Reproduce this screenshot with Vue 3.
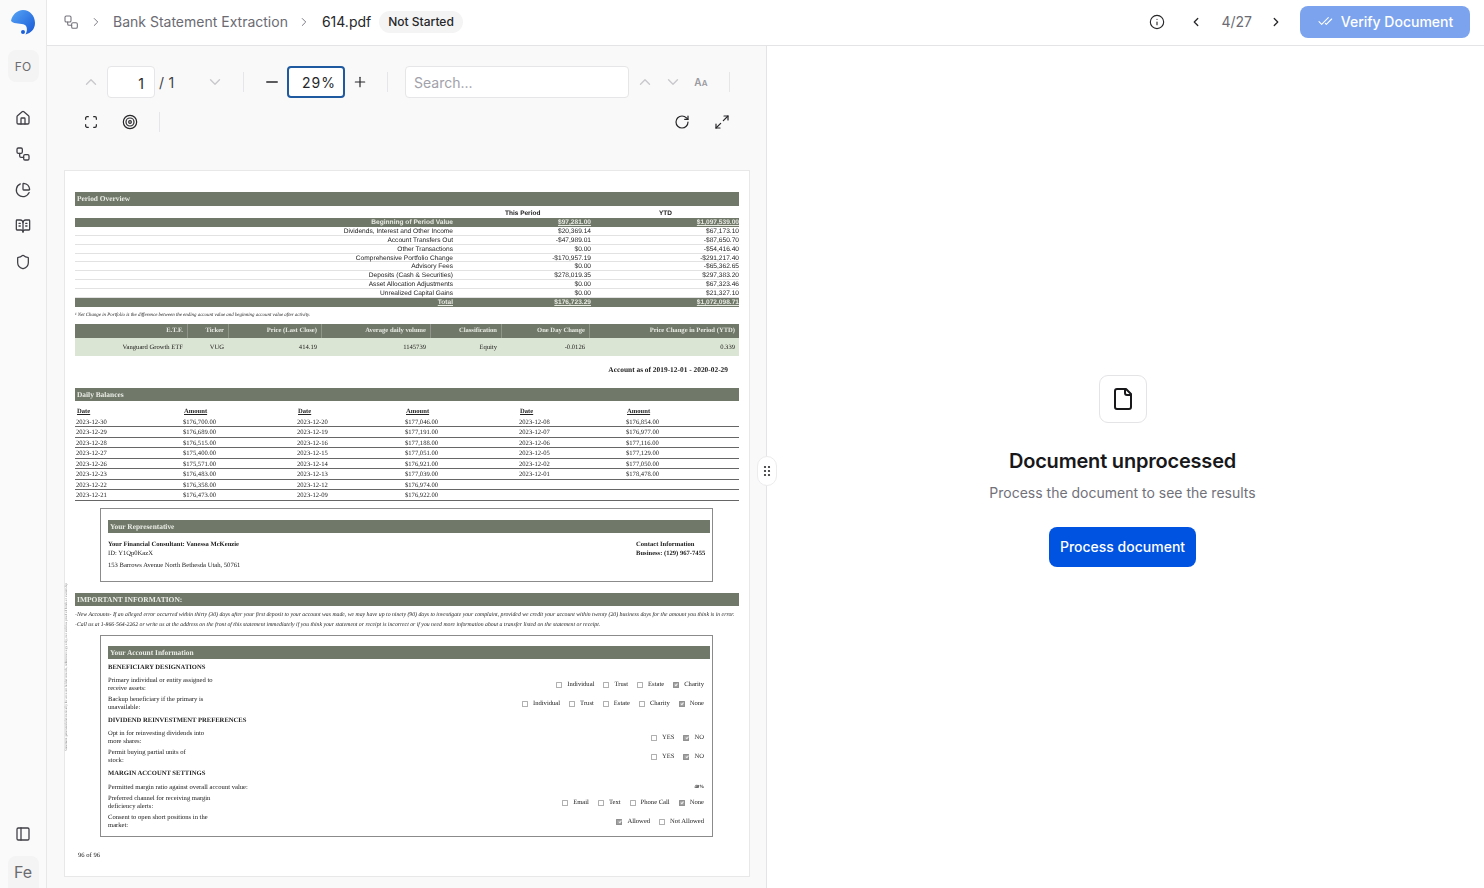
<template>
  <div class="app">
    <aside class="sidebar">
      <div class="logo_wrap">
        <svg class="logo" viewBox="0 0 26 28" aria-hidden="true">
          <defs>
            <linearGradient id="logo_grad" x1="0" y1="0" x2="1" y2="1">
              <stop offset="0" stop-color="#58a6f6" />
              <stop offset="1" stop-color="#1657d6" />
            </linearGradient>
          </defs>
          <path fill="url(#logo_grad)" d="M1 13C2 7 7 2 13 2c7 0 12 6 12 13 0 6-4 10-9.500 11.500 2-3.500 2-7.500-.5-9.500C11 14.500 5 17 1 13z" />
          <circle cx="13" cy="24" r="2" fill="#1a5fdc" />
        </svg>
      </div>
      <div class="avatar">FO</div>
      <nav class="side_nav">
        <svg v-for="item in side_icons" :key="item.name" class="icon side_icon" viewBox="0 0 24 24">
          <path v-for="d in item.paths" :key="d" :d="d" />
        </svg>
      </nav>
      <svg class="icon side_icon panel_icon" viewBox="0 0 24 24">
        <rect x="3" y="3" width="18" height="18" rx="2" />
        <path d="M9 3v18" />
      </svg>
      <div class="avatar avatar_fe">Fe</div>
    </aside>

    <div class="main">
      <header class="topbar">
        <svg class="icon crumb_icon" viewBox="0 0 24 24">
          <rect x="3" y="3" width="9" height="9" rx="2" />
          <rect x="13" y="13" width="8.500" height="8.500" rx="2" />
          <path d="M7 12v3a2 2 0 0 0 2 2h4" />
        </svg>
        <svg class="icon chev crumb_chev" viewBox="0 0 24 24"><path d="m9 18 6-6-6-6" /></svg>
        <span class="crumb">Bank Statement Extraction</span>
        <svg class="icon chev crumb_chev_2" viewBox="0 0 24 24"><path d="m9 18 6-6-6-6" /></svg>
        <span class="file_name">614.pdf</span>
        <span class="status">Not Started</span>

        <div class="top_right">
          <svg class="icon info_icon" viewBox="0 0 24 24">
            <circle cx="12" cy="12" r="10" />
            <path d="M12 16v-4" />
            <path d="M12 8h.01" />
          </svg>
          <svg class="icon chev nav_prev" viewBox="0 0 24 24"><path d="m15 18-6-6 6-6" /></svg>
          <span class="pager">4/27</span>
          <svg class="icon chev nav_next" viewBox="0 0 24 24"><path d="m9 18 6-6-6-6" /></svg>
          <button class="verify_btn">
            <svg class="icon verify_icon" viewBox="0 0 24 24">
              <path d="M17 7 7 17l-4-4" />
              <path d="m22 9-8 8-1.500-1.500" />
            </svg>
            Verify Document
          </button>
        </div>
      </header>

      <div class="content">
        <section class="viewer">
          <div class="toolbar">
            <div class="tool_row">
              <svg class="icon tool faded" viewBox="0 0 24 24"><path d="m18 15-6-6-6 6" /></svg>
              <div class="page_input">1</div>
              <span class="page_total">/ 1</span>
              <svg class="icon tool faded page_down" viewBox="0 0 24 24"><path d="m6 9 6 6 6-6" /></svg>
              <span class="tool_sep sep_a"></span>
              <svg class="icon tool zoom_minus" viewBox="0 0 24 24"><path d="M5 12h14" /></svg>
              <div class="zoom_box">29%</div>
              <svg class="icon tool zoom_plus" viewBox="0 0 24 24"><path d="M5 12h14" /><path d="M12 5v14" /></svg>
              <span class="tool_sep sep_b"></span>
              <div class="search_box">Search...</div>
              <svg class="icon tool faded search_up" viewBox="0 0 24 24"><path d="m18 15-6-6-6 6" /></svg>
              <svg class="icon tool faded" viewBox="0 0 24 24"><path d="m6 9 6 6 6-6" /></svg>
              <span class="aa"><span>A</span><span class="aa_small">A</span></span>
              <span class="tool_sep sep_c"></span>
            </div>
            <div class="tool_row tool_row_2">
              <svg class="icon tool" viewBox="0 0 24 24">
                <path d="M4 8V6a2 2 0 0 1 2-2h2" /><path d="M16 4h2a2 2 0 0 1 2 2v2" />
                <path d="M20 16v2a2 2 0 0 1-2 2h-2" /><path d="M8 20H6a2 2 0 0 1-2-2v-2" />
              </svg>
              <svg class="icon tool target" viewBox="0 0 24 24">
                <circle cx="12" cy="12" r="10" /><circle cx="12" cy="12" r="6" /><circle cx="12" cy="12" r="2" />
              </svg>
              <span class="tool_sep sep_d"></span>
              <svg class="icon tool reload" viewBox="0 0 24 24">
                <path d="M21 12a9 9 0 1 1-9-9c2.520 0 4.930 1 6.740 2.740L21 8" /><path d="M21 3v5h-5" />
              </svg>
              <svg class="icon tool expand" viewBox="0 0 24 24">
                <path d="M15 3h6v6" /><path d="m21 3-7 7" /><path d="m3 21 7-7" /><path d="M9 21H3v-6" />
              </svg>
            </div>
          </div>

          <div class="paper">
            <div class="edge_text">Statement generated electronically for account holder records, reference copy only, not valid as proof of funds or ownership</div>
            <div class="band band_lg">Period Overview</div>
            <div class="period_head">
              <span></span><span class="ph_a">This Period</span><span class="ph_b">YTD</span>
            </div>
            <div class="period_row period_band">
              <span>Beginning of Period Value</span><u>$97,281.00</u><u>$1,097,539.00</u>
            </div>
            <div v-for="row in period_rows" :key="row[0]" class="period_row">
              <span>{{ row[0] }}</span><span>{{ row[1] }}</span><span>{{ row[2] }}</span>
            </div>
            <div class="period_row period_band">
              <u>Total</u><u>$176,723.29</u><u>$1,072,098.71</u>
            </div>
            <div class="note">¹ Net Change in Portfolio is the difference between the ending account value and beginning account value after activity.</div>

            <div class="etf_grid etf_head">
              <span v-for="h in etf_head" :key="h">{{ h }}</span>
            </div>
            <div class="etf_grid etf_row">
              <span v-for="c in etf_row" :key="c">{{ c }}</span>
            </div>
            <div class="as_of">Account as of 2019-12-01 - 2020-02-29</div>

            <div class="band">Daily Balances</div>
            <div class="daily_grid daily_head">
              <span v-for="(h, i) in daily_head" :key="i">{{ h }}</span>
            </div>
            <div v-for="row in daily_rows" :key="row[0]" class="daily_grid daily_row">
              <span v-for="(c, i) in row" :key="i">{{ c }}</span>
            </div>

            <div class="box rep_box">
              <div class="band box_band">Your Representative</div>
              <div class="rep_body">
                <div>
                  <div class="rep_line"><b>Your Financial Consultant: Vanessa McKenzie</b></div>
                  <div class="rep_line">ID: Y1Qp0KazX</div>
                  <div class="rep_line rep_addr">153 Barrows Avenue North Bethesda Utah, 50761</div>
                </div>
                <div class="rep_contact">
                  <div class="rep_line"><b>Contact Information</b></div>
                  <div class="rep_line"><b>Business: (129) 967-7455</b></div>
                </div>
              </div>
            </div>

            <div class="band important">IMPORTANT INFORMATION:</div>
            <div class="fine">-New Accounts- If an alleged error occurred within thirty (30) days after your first deposit to your account was made, we may have up to ninety (90) days to investigate your complaint, provided we credit your account within twenty (20) business days for the amount you think is in error.</div>
            <div class="fine">-Call us at 1-866-564-2262 or write us at the address on the front of this statement immediately if you think your statement or receipt is incorrect or if you need more information about a transfer listed on the statement or receipt.</div>

            <div class="box acct_box">
              <div class="band box_band">Your Account Information</div>
              <template v-for="row in acct_rows" :key="row.lines[0]">
                <div v-if="row.head" class="acct_head">{{ row.lines[0] }}</div>
                <div v-else class="acct_row" :class="{ single: row.single }">
                  <div class="acct_label">
                    <div v-for="line in row.lines" :key="line">{{ line }}</div>
                  </div>
                  <b v-if="row.value" class="acct_value">{{ row.value }}</b>
                  <div v-else class="acct_opts">
                    <span v-for="o in row.opts" :key="o.t" class="opt">
                      <i class="check" :class="{ on: o.on }"></i>{{ o.t }}
                    </span>
                  </div>
                </div>
              </template>
            </div>
            <div class="page_no">96 of 96</div>
          </div>
        </section>

        <div class="splitter">
          <svg class="grip" viewBox="0 0 8 12">
            <circle v-for="p in grip" :key="p[0] + '_' + p[1]" :cx="p[0]" :cy="p[1]" r="1.100" />
          </svg>
        </div>

        <section class="results">
          <div class="file_box">
            <svg class="icon file_icon" viewBox="0 0 24 24">
              <path d="M15 2H6a2 2 0 0 0-2 2v16a2 2 0 0 0 2 2h12a2 2 0 0 0 2-2V7Z" />
              <path d="M14 2v4a2 2 0 0 0 2 2h4" />
            </svg>
          </div>
          <h2 class="empty_title">Document unprocessed</h2>
          <p class="empty_sub">Process the document to see the results</p>
          <button class="process_btn">Process document</button>
        </section>
      </div>
    </div>
  </div>
</template>

<script setup>
const side_icons = [
  {
    name: "home",
    paths: [
      "M15 21v-8a1 1 0 0 0-1-1h-4a1 1 0 0 0-1 1v8",
      "M3 10a2 2 0 0 1 .709-1.528l7-5.999a2 2 0 0 1 2.582 0l7 5.999A2 2 0 0 1 21 10v9a2 2 0 0 1-2 2H5a2 2 0 0 1-2-2z",
    ],
  },
  {
    name: "flows",
    paths: [
      "M5 3h4a2 2 0 0 1 2 2v4a2 2 0 0 1-2 2H5a2 2 0 0 1-2-2V5a2 2 0 0 1 2-2z",
      "M15 13h4a2 2 0 0 1 2 2v4a2 2 0 0 1-2 2h-4a2 2 0 0 1-2-2v-4a2 2 0 0 1 2-2z",
      "M7 11v4a2 2 0 0 0 2 2h4",
    ],
  },
  {
    name: "chart",
    paths: [
      "M21 12c.552 0 1.005-.449.95-.998a10 10 0 0 0-8.953-8.951c-.55-.055-.998.398-.998.95v8a1 1 0 0 0 1 1z",
      "M21.21 15.89A10 10 0 1 1 8 2.83",
    ],
  },
  {
    name: "book",
    paths: [
      "M12 7v14",
      "M3 18a1 1 0 0 1-1-1V4a1 1 0 0 1 1-1h5a4 4 0 0 1 4 4 4 4 0 0 1 4-4h5a1 1 0 0 1 1 1v13a1 1 0 0 1-1 1h-6a3 3 0 0 0-3 3 3 3 0 0 0-3-3z",
      "M16 12h2",
      "M16 8h2",
      "M6 12h2",
      "M6 8h2",
    ],
  },
  {
    name: "shield",
    paths: [
      "M20 13c0 5-3.5 7.5-7.66 8.95a1 1 0 0 1-.67-.01C7.5 20.5 4 18 4 13V6a1 1 0 0 1 1-1c2 0 4.5-1.2 6.24-2.72a1.17 1.17 0 0 1 1.52 0C14.51 3.81 17 5 19 5a1 1 0 0 1 1 1z",
    ],
  },
];

const grip = [[2, 2], [6, 2], [2, 6], [6, 6], [2, 10], [6, 10]];

const period_rows = [
  ["Dividends, Interest and Other Income", "$20,369.14", "$67,173.10"],
  ["Account Transfers Out", "-$47,989.01", "-$87,650.70"],
  ["Other Transactions", "$0.00", "-$54,416.40"],
  ["Comprehensive Portfolio Change", "-$170,957.19", "-$291,217.40"],
  ["Advisory Fees", "$0.00", "-$65,362.65"],
  ["Deposits (Cash & Securities)", "$278,019.35", "$297,383.20"],
  ["Asset Allocation Adjustments", "$0.00", "$67,323.46"],
  ["Unrealized Capital Gains", "$0.00", "$21,327.10"],
];

const etf_head = ["E.T.F.", "Ticker", "Price (Last Close)", "Average daily volume", "Classification", "One Day Change", "Price Change in Period (YTD)"];
const etf_row = ["Vanguard Growth ETF", "VUG", "414.19", "1145739", "Equity", "-0.0126", "0.339"];

const daily_head = ["Date", "Amount", "Date", "Amount", "Date", "Amount"];
const daily_rows = [
  ["2023-12-30", "$176,700.00", "2023-12-20", "$177,046.00", "2023-12-08", "$176,854.00"],
  ["2023-12-29", "$176,689.00", "2023-12-19", "$177,191.00", "2023-12-07", "$176,977.00"],
  ["2023-12-28", "$176,515.00", "2023-12-16", "$177,188.00", "2023-12-06", "$177,116.00"],
  ["2023-12-27", "$175,400.00", "2023-12-15", "$177,051.00", "2023-12-05", "$177,129.00"],
  ["2023-12-26", "$175,571.00", "2023-12-14", "$176,921.00", "2023-12-02", "$177,050.00"],
  ["2023-12-23", "$176,483.00", "2023-12-13", "$177,039.00", "2023-12-01", "$178,478.00"],
  ["2023-12-22", "$176,358.00", "2023-12-12", "$176,974.00", "", ""],
  ["2023-12-21", "$176,473.00", "2023-12-09", "$176,922.00", "", ""],
];

const opts = (list, checked) => list.map((t) => ({ t, on: t === checked }));

const acct_rows = [
  { head: true, lines: ["BENEFICIARY DESIGNATIONS"] },
  { lines: ["Primary individual or entity assigned to", "receive assets:"], opts: opts(["Individual", "Trust", "Estate", "Charity"], "Charity") },
  { lines: ["Backup beneficiary if the primary is", "unavailable:"], opts: opts(["Individual", "Trust", "Estate", "Charity", "None"], "None") },
  { head: true, lines: ["DIVIDEND REINVESTMENT PREFERENCES"] },
  { lines: ["Opt in for reinvesting dividends into", "more shares:"], opts: opts(["YES", "NO"], "NO") },
  { lines: ["Permit buying partial units of", "stock:"], opts: opts(["YES", "NO"], "NO") },
  { head: true, lines: ["MARGIN ACCOUNT SETTINGS"] },
  { lines: ["Permitted margin ratio against overall account value:"], value: "40%", single: true },
  { lines: ["Preferred channel for receiving margin", "deficiency alerts:"], opts: opts(["Email", "Text", "Phone Call", "None"], "None") },
  { lines: ["Consent to open short positions in the", "market:"], opts: opts(["Allowed", "Not Allowed"], "Allowed") },
];
</script>

<style>
html,
body {
  margin: 0;
  background: #fff;
}
</style>

<style scoped>
.app {
  display: flex;
  width: 1484px;
  height: 888px;
  overflow: hidden;
  font-family: Inter, "Liberation Sans", sans-serif;
  color: #18181b;
}

.icon {
  fill: none;
  stroke: currentColor;
  stroke-width: 2;
  stroke-linecap: round;
  stroke-linejoin: round;
  flex: none;
}

.sidebar {
  width: 46px;
  flex: none;
  display: flex;
  flex-direction: column;
  align-items: center;
  background: #fafafa;
  border-right: 1px solid #e8e8e8;
  color: #3f3f46;
}

.logo_wrap {
  height: 50px;
  display: flex;
  align-items: flex-start;
  padding-top: 8px;
  box-sizing: border-box;
}

.logo {
  width: 26px;
  height: 28px;
}

.avatar {
  width: 31px;
  height: 32px;
  border-radius: 8px;
  background: #f4f4f4;
  display: flex;
  align-items: center;
  justify-content: center;
  font-size: 12px;
  color: #6b6b70;
}

.avatar_fe {
  margin-top: 14px;
  font-size: 16px;
  border-radius: 8px 8px 0 0;
}

.side_nav {
  display: flex;
  flex-direction: column;
  align-items: center;
  gap: 20px;
  margin-top: 28px;
  flex: 1;
}

.side_icon {
  width: 16px;
  height: 16px;
  stroke-width: 1.9;
}

.panel_icon {
  width: 16px;
  height: 16px;
}

.main {
  flex: 1;
  min-width: 0;
  display: flex;
  flex-direction: column;
}

.topbar {
  height: 46px;
  flex: none;
  display: flex;
  align-items: center;
  box-sizing: border-box;
  border-bottom: 1px solid #e4e4e7;
  padding: 0 14px 2px 16px;
  font-size: 14px;
}

.crumb_icon {
  width: 16px;
  height: 16px;
  color: #71717a;
  stroke-width: 1.6;
}

.chev {
  width: 14px;
  height: 14px;
}

.crumb_chev {
  margin-left: 10px;
  color: #71717a;
  stroke-width: 1.600;
}

.crumb {
  margin-left: 10px;
  color: #6b6b73;
}

.crumb_chev_2 {
  margin-left: 9px;
  color: #71717a;
  stroke-width: 1.600;
}

.file_name {
  margin-left: 11px;
  color: #27272a;
}

.status {
  margin-left: 8px;
  height: 22px;
  display: flex;
  align-items: center;
  padding: 0 9px;
  border-radius: 11px;
  background: #f4f4f5;
  font-size: 12px;
  font-weight: 500;
  color: #27272a;
}

.top_right {
  margin-left: auto;
  display: flex;
  align-items: center;
}

.info_icon {
  width: 16px;
  height: 16px;
  color: #27272a;
  stroke-width: 1.700;
}

.nav_prev {
  margin-left: 24px;
  color: #27272a;
  stroke-width: 2.200;
}

.pager {
  margin-left: 18px;
  color: #6b6b73;
}

.nav_next {
  margin-left: 17px;
  color: #27272a;
  stroke-width: 2.200;
}

.verify_btn {
  margin: 1px 0 0 17px;
  width: 170px;
  height: 32px;
  padding: 0 0 2px;
  border: 0;
  border-radius: 8px;
  background: #7ba3ee;
  color: #fff;
  display: flex;
  align-items: center;
  justify-content: center;
  gap: 8px;
  font: 500 14px Inter, "Liberation Sans", sans-serif;
}

.verify_icon {
  width: 16px;
  height: 16px;
  stroke-width: 1.600;
}

.content {
  flex: 1;
  min-height: 0;
  display: flex;
  position: relative;
}

.viewer {
  flex: none;
  background: #f9f9f9;
  border-right: 1px solid #e4e4e7;
  padding: 0 16px 0 17px;
  box-sizing: content-box;
  width: 686px;
}

.toolbar {
  height: 124px;
  padding-top: 20px;
  box-sizing: border-box;
}

.tool_row {
  display: flex;
  align-items: center;
  height: 32px;
  padding-left: 13px;
}

.tool_row_2 {
  margin-top: 8px;
}

.tool {
  width: 28px;
  height: 18px;
  color: #27272a;
  stroke-width: 1.8;
}

.tool_row_2 .tool {
  height: 16px;
}

.faded {
  color: #c9c9cd;
}

.page_input {
  margin-left: 2px;
  width: 48px;
  height: 32px;
  box-sizing: border-box;
  background: #fff;
  border: 1px solid #e6e6e8;
  border-radius: 4px;
  display: flex;
  align-items: center;
  justify-content: flex-end;
  padding-right: 10px;
  font-size: 14px;
  padding-top: 2px;
  color: #27272a;
}

.page_total {
  margin-left: 4px;
  width: 42px;
  font-size: 14px;
  letter-spacing: 0.2px;
  color: #3f3f46;
}

.page_down {
  margin-right: 14px;
}

.tool_sep {
  width: 1px;
  height: 20px;
  background: #e6e6e8;
  flex: none;
}

.sep_a {
  margin-right: 14px;
}

.zoom_box {
  margin-left: 1px;
  width: 58px;
  height: 32px;
  box-sizing: border-box;
  border: 2px solid #1f5aa0;
  border-radius: 4px;
  background: #fff;
  display: flex;
  align-items: center;
  justify-content: center;
  padding-left: 6px;
  font-size: 14px;
  letter-spacing: 1px;
  color: #27272a;
}

.zoom_plus {
  margin-left: 1px;
  margin-right: 13px;
  height: 16px;
}

.sep_b {
  margin-right: 17px;
}

.search_box {
  width: 224px;
  height: 32px;
  box-sizing: border-box;
  background: #fff;
  border: 1px solid #e6e6e8;
  border-radius: 4px;
  display: flex;
  align-items: center;
  padding-left: 8px;
  font-size: 14px;
  color: #a1a1aa;
}

.search_up {
  margin-left: 2px;
}

.aa {
  width: 28px;
  text-align: center;
  font-size: 10px;
  font-weight: 600;
  color: #9a9aa0;
  letter-spacing: 0.3px;
}

.aa_small {
  font-size: 8px;
}

.sep_c {
  margin-left: 14px;
}

.target {
  margin-left: 11px;
}

.sep_d {
  margin-left: 15px;
}

.reload {
  margin-left: auto;
}

.expand {
  margin-left: 12px;
  margin-right: 14px;
}

.paper {
  position: relative;
  width: 686px;
  height: 707px;
  box-sizing: border-box;
  background: #fff;
  border: 1px solid #e8e8e8;
  padding: 21px 10px 0;
  font-family: "Liberation Serif", serif;
  font-size: 6.600px;
  color: #222;
  text-rendering: geometricPrecision;
  filter: blur(0.35px);
}

.edge_text {
  position: absolute;
  left: 0;
  top: 390px;
  height: 190px;
  writing-mode: vertical-rl;
  transform: rotate(180deg);
  font-size: 3.400px;
  line-height: 3px;
  color: #888;
  white-space: nowrap;
}

.band {
  height: 13px;
  background: #70786a;
  color: #e9ece4;
  font-weight: 700;
  font-size: 7.400px;
  line-height: 13px;
  padding-left: 2px;
}

.band_lg {
  height: 14px;
  line-height: 14px;
}

.period_head {
  display: grid;
  grid-template-columns: 378px 138px 148px;
  height: 12px;
  font-family: "Liberation Sans", sans-serif;
  font-weight: 700;
  font-size: 6.500px;
  line-height: 8px;
  padding-top: 4px;
  box-sizing: border-box;
}

.ph_a {
  padding-left: 52px;
}

.ph_b {
  padding-left: 68px;
}

.period_row {
  display: grid;
  grid-template-columns: 378px 138px 148px;
  height: 8.900px;
  line-height: 10.500px;
  text-align: right;
  font-family: "Liberation Sans", sans-serif;
  font-size: 6.600px;
  color: #222;
  box-sizing: border-box;
  border-bottom: 0.5px solid #e2e2e2;
}

.period_band {
  background: #70786a;
  color: #e6e9e0;
  font-weight: 700;
  border-bottom: 0;
}

.note {
  height: 17px;
  line-height: 18px;
  font-style: italic;
  font-size: 4.930px;
  white-space: nowrap;
}

.etf_grid {
  display: grid;
  grid-template-columns: 112px 41px 93px 109px 71px 88px 150px;
  text-align: right;
  font-size: 6.600px;
}

.etf_grid span {
  padding-right: 4px;
}

.etf_head {
  height: 14px;
  line-height: 13px;
  background: #70786a;
  color: #e6e9e0;
  font-weight: 700;
}

.etf_head span + span {
  border-left: 1px solid #8f9689;
}

.etf_row {
  height: 18px;
  line-height: 20px;
  background: #dbe5d3;
  color: #222;
}

.as_of {
  height: 32px;
  padding: 7px 11px 0 0;
  box-sizing: border-box;
  line-height: 14px;
  text-align: right;
  font-weight: 700;
  font-size: 7.400px;
}

.daily_grid {
  display: grid;
  grid-template-columns: 107px 114px 108px 114px 107px 114px;
  font-size: 6.600px;
}

.daily_head {
  height: 16px;
  padding: 6px 0 0 2px;
  box-sizing: border-box;
  line-height: 10px;
  font-weight: 700;
  text-decoration: underline;
}

.daily_row {
  height: 10.500px;
  box-sizing: border-box;
  padding-left: 1px;
  line-height: 12px;
  border-bottom: 0.800px solid #666;
}

.box {
  margin-left: 25px;
  width: 613px;
  box-sizing: border-box;
  border: 1px solid #8b8b8b;
  padding: 0 2px 0 7px;
  background: #fff;
}

.rep_box {
  margin-top: 7px;
  height: 74px;
  padding-top: 11px;
}

.box_band {
  padding-left: 2px;
}

.rep_body {
  display: flex;
  justify-content: space-between;
  padding-top: 7px;
}

.rep_line {
  height: 9.500px;
  line-height: 10px;
}

.rep_addr {
  margin-top: 2.500px;
}

.rep_contact {
  width: 74px;
}

.important {
  margin-top: 11px;
  font-size: 7.500px;
}

.fine {
  height: 10px;
  line-height: 12px;
  font-style: italic;
  font-size: 5.760px;
  white-space: nowrap;
}

.important + .fine {
  margin-top: 3px;
}

.acct_box {
  margin-top: 6px;
  height: 202px;
  padding-top: 10px;
}

.acct_head {
  margin-top: 4px;
  height: 8px;
  line-height: 10px;
  font-weight: 700;
}

.acct_row + .acct_head {
  margin-top: 5.500px;
}

.acct_row {
  margin-top: 4px;
  height: 15px;
  box-sizing: border-box;
  padding: 2px 6px 0 0;
  display: flex;
  justify-content: space-between;
  align-items: center;
}

.acct_head + .acct_row {
  margin-top: 5.500px;
}

.acct_row.single {
  height: 8px;
}

.acct_label {
  line-height: 7.500px;
  white-space: nowrap;
}

.acct_value {
  font-size: 4.800px;
}

.acct_opts {
  display: flex;
  gap: 9px;
}

.opt {
  display: flex;
  align-items: center;
  gap: 5px;
}

.check {
  position: relative;
  width: 4px;
  height: 4px;
  border: 0.500px solid #b0b0b0;
  background: #fff;
  border-radius: 0.500px;
}

.check.on {
  background: #a0a0a0;
  border-color: #909090;
}

.check.on::after {
  content: "";
  position: absolute;
  left: 1.200px;
  top: 0.200px;
  width: 1.200px;
  height: 2.400px;
  border: solid #eee;
  border-width: 0 0.500px 0.500px 0;
  transform: rotate(40deg);
}

.page_no {
  margin-top: 13px;
  padding-left: 3px;
  line-height: 12px;
}

.splitter {
  position: absolute;
  left: 710px;
  top: 410px;
  width: 20px;
  height: 30px;
  box-sizing: border-box;
  background: #fff;
  border: 1px solid #ececee;
  border-radius: 10px;
  display: flex;
  align-items: center;
  justify-content: center;
}

.grip {
  width: 8px;
  height: 12px;
  fill: #27272a;
}

.results {
  flex: 1;
  min-width: 0;
  display: flex;
  flex-direction: column;
  align-items: center;
  padding: 329px 6px 0 0;
}

.file_box {
  width: 48px;
  height: 48px;
  box-sizing: border-box;
  border: 1px solid #e4e4e7;
  border-radius: 9px;
  display: flex;
  align-items: center;
  justify-content: center;
}

.file_icon {
  width: 24px;
  height: 24px;
  color: #18181b;
}

.empty_title {
  margin: 24px 0 0;
  font-size: 20px;
  line-height: 28px;
  font-weight: 600;
  letter-spacing: -0.2px;
  color: #18181b;
}

.empty_sub {
  margin: 8px 0 0;
  font-size: 14px;
  line-height: 20px;
  color: #71717a;
}

.process_btn {
  margin-top: 24px;
  width: 147px;
  height: 40px;
  padding: 0 0 1px;
  border: 0;
  border-radius: 8px;
  background: #0052e0;
  color: #fff;
  font: 500 14px Inter, "Liberation Sans", sans-serif;
}
</style>
